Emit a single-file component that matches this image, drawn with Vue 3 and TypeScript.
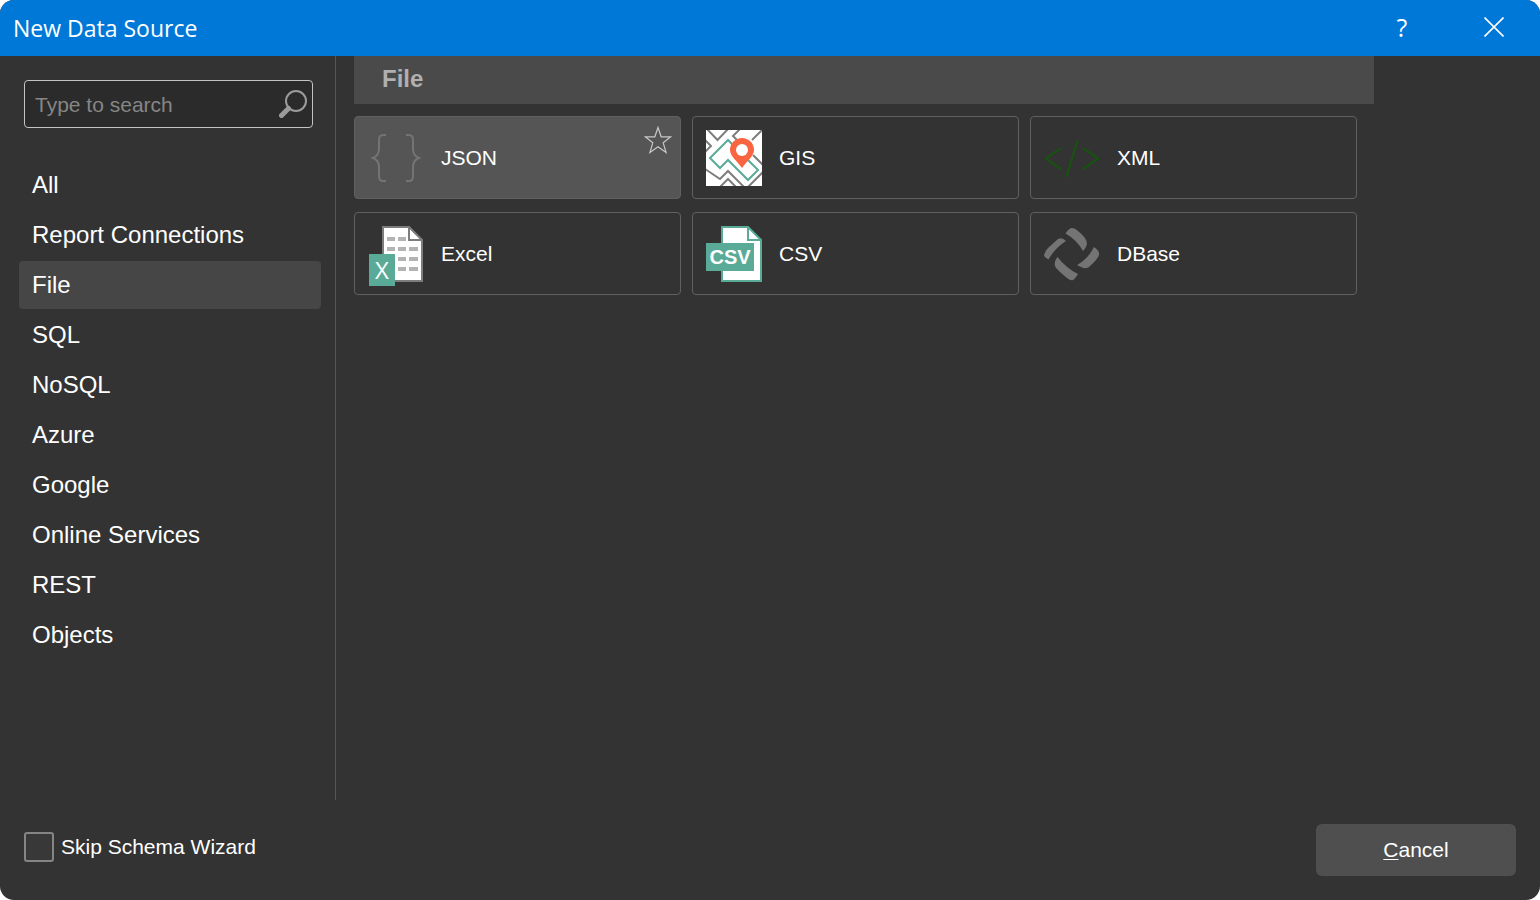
<script setup lang="ts">
import { ref, computed } from 'vue'

type IconName = 'json' | 'gis' | 'xml' | 'excel' | 'csv' | 'dbase'
interface Source { name: string; icon: IconName }

const categories: string[] = [
  'All', 'Report Connections', 'File', 'SQL', 'NoSQL',
  'Azure', 'Google', 'Online Services', 'REST', 'Objects',
]
const sources: Source[] = [
  { name: 'JSON', icon: 'json' },
  { name: 'GIS', icon: 'gis' },
  { name: 'XML', icon: 'xml' },
  { name: 'Excel', icon: 'excel' },
  { name: 'CSV', icon: 'csv' },
  { name: 'DBase', icon: 'dbase' },
]

const category = ref('File')
const active = ref('JSON')
const query = ref('')
const skipWizard = ref(false)

const visible = computed(() =>
  sources.filter((s) => s.name.toLowerCase().includes(query.value.trim().toLowerCase())),
)
</script>

<template>
  <div class="dialog" role="dialog" aria-labelledby="dialog-title">
    <header class="titlebar">
      <h1 id="dialog-title">New Data Source</h1>
      <button type="button" class="caption help" aria-label="Help">?</button>
      <button type="button" class="caption" aria-label="Close">
        <svg width="20" height="20" viewBox="0 0 20 20"><path d="M.5.5l19 19M19.5.5l-19 19" stroke="#fff" stroke-width="1.6" /></svg>
      </button>
    </header>

    <div class="body">
      <aside class="sidebar">
        <div class="search">
          <input v-model="query" type="text" placeholder="Type to search" aria-label="Type to search" />
          <svg width="28" height="28" viewBox="0 0 28 28" fill="none" stroke="#9b9b9b">
            <circle cx="17" cy="11" r="10" stroke-width="2" />
            <path d="M9.5 18.500L2.500 25.500" stroke-width="5" stroke-linecap="round" />
          </svg>
        </div>
        <nav>
          <button
            v-for="c in categories"
            :key="c"
            type="button"
            class="category"
            :class="{ selected: c === category }"
            @click="category = c"
          >{{ c }}</button>
        </nav>
      </aside>

      <main class="content">
        <h2>{{ category }}</h2>
        <div class="grid">
          <div v-for="s in visible" :key="s.name" class="card" :class="{ active: s.name === active }">
            <button type="button" class="source" @click="active = s.name">
              <svg v-if="s.icon === 'json'" class="icon" viewBox="0 0 56 60" fill="none" stroke="#747474" stroke-width="2">
                <path d="M18 5h-3c-3 0-4 1.500-4 5v9c0 4-1 7-6 9 5 2 6 5 6 9v9c0 3.500 1 5 4 5h3" />
                <path d="M38 5h3c3 0 4 1.500 4 5v9c0 4 1 7 6 9-5 2-6 5-6 9v9c0 3.500-1 5-4 5h-3" />
              </svg>
              <svg v-else-if="s.icon === 'gis'" class="icon" viewBox="0 0 56 60" fill="none">
                <svg width="56" height="56" viewBox="0 0 56 56">
                  <path d="M0 0h56v56H0z" fill="#fff" />
                  <g stroke="#7d7d7d" stroke-width="2">
                    <path d="M0-2L11.500 10 23-2M-1 10l6 6-6 6M34-1l-7 7 6 6M57-1L46 10M47 25l10 10M-1 39l15 10 8-8 17 17M14 57l8-8 8 8M42 57l15-15" />
                  </g>
                  <path d="M22 10L4 28l10 10 8-8 20 20 10-10-30-30z" stroke="#5aaa98" stroke-width="2" />
                  <path d="M36 38C31 31 24 26 24 20a12 12 0 0 1 24 0c0 6-7 11-12 18z" fill="#fa6541" />
                  <circle cx="36" cy="20" r="6" fill="#fff" />
                </svg>
              </svg>
              <svg v-else-if="s.icon === 'xml'" class="icon" viewBox="0 0 56 60" fill="none" stroke="#14560c" stroke-width="2">
                <path d="M17 18L2 28.500 17 39M39 18l15 10.500L39 39M33.500 10l-11 37" />
              </svg>
              <svg v-else-if="s.icon === 'excel'" class="icon" viewBox="0 0 56 60">
                <path d="M15 1h26l13 13v41H15z" fill="#fff" stroke="#7d7d7d" stroke-width="2" />
                <path d="M41 1v13h13" fill="none" stroke="#7d7d7d" stroke-width="2" />
                <path d="M19 11h8v4h-8zM30 11h8v4h-8zM19 21h8v4h-8zM30 21h8v4h-8zM41 21h9v4h-9zM30 31h8v4h-8zM41 31h9v4h-9zM30 41h8v4h-8zM41 41h9v4h-9z" fill="#b3b3b3" />
                <path d="M1 28h26v32H1z" fill="#5aaa98" />
                <text class="excel-mark" x="14" y="53" text-anchor="middle">X</text>
              </svg>
              <svg v-else-if="s.icon === 'csv'" class="icon" viewBox="0 0 56 60">
                <path d="M16 1h26l13 13v41H16z" fill="#fff" stroke="#5aaa98" stroke-width="2" />
                <path d="M42 1v13h13" fill="none" stroke="#5aaa98" stroke-width="2" />
                <path d="M0 17h48v28H0z" fill="#5aaa98" />
                <text class="csv-mark" x="24" y="38" text-anchor="middle">CSV</text>
              </svg>
              <svg v-else class="icon" viewBox="0 0 56 60" fill="#747474">
                <path d="M21.500 7.500Q25 2 28 2T34 5Q43 12 43 18 42 22 39 25 33 14 21.500 7.500z" />
                <path d="M0 29Q1 25 4 22L14 13Q18 11 22 15 11 22 4.500 33.500 0 31 0 29z" />
                <path d="M13.500 31Q10 35 11 40 12 43 23 52 27 55 29 54 31 53 34 48 22 42 13.500 31z" />
                <path d="M50 21Q56 25 55 29 54 33 45 41 41 44 33 39 44 33 50 21z" />
              </svg>
              <span>{{ s.name }}</span>
            </button>
            <button v-if="s.name === active" type="button" class="star" aria-label="Add to favorites">
              <svg width="28" height="28" viewBox="0 0 28 28">
                <path d="M14 1.500l3.200 9.300h9.600l-7.600 6 2.900 9.700-8.100-5.800-8.100 5.800 2.900-9.700-7.600-6h9.600z" fill="none" stroke="#c8c8c8" stroke-width="1.200" />
              </svg>
            </button>
          </div>
        </div>
      </main>
    </div>

    <footer class="footer">
      <label class="skip">
        <input v-model="skipWizard" type="checkbox" />
        <span>Skip Schema Wizard</span>
      </label>
      <button type="button" class="cancel"><u>C</u>ancel</button>
    </footer>
  </div>
</template>

<style>
body {
  background: #fff;
}
</style>

<style scoped>
.dialog,
.dialog * {
  box-sizing: border-box;
}
.dialog {
  display: flex;
  flex-direction: column;
  min-height: 100vh;
  overflow: hidden;
  border-radius: 14px;
  background: #333;
  color: #fff;
  font-family: "Liberation Sans", Arial, sans-serif;
  font-size: 21px;
  line-height: 24px;
}
button {
  margin: 0;
  padding: 0;
  border: 0;
  background: none;
  color: inherit;
  font: inherit;
  cursor: pointer;
}
.titlebar {
  display: flex;
  align-items: center;
  height: 56px;
  background: #0078d7;
  font-family: "Open Sans", "Noto Sans", sans-serif;
}
.titlebar h1 {
  flex: 1;
  margin: 0;
  padding-left: 13px;
  font-size: 23px;
  line-height: 32px;
  font-weight: 400;
}
.caption {
  display: flex;
  align-items: center;
  justify-content: center;
  width: 92px;
  height: 54px;
  align-self: flex-start;
}
.help {
  font-size: 25px;
  font-weight: 500;
}
.body {
  display: flex;
  flex: 1;
}
.sidebar {
  flex: none;
  width: 336px;
  padding-top: 24px;
  border-right: 1px solid #555;
}
.search {
  display: flex;
  align-items: center;
  height: 48px;
  margin: 0 22px 33px 24px;
  padding: 0 5px 0 10px;
  border: 1px solid #c4c4c4;
  border-radius: 4px;
  background: #2b2b2b;
}
.search input {
  flex: 1;
  min-width: 0;
  height: 100%;
  padding: 2px 0 0;
  border: 0;
  outline: 0;
  background: none;
  color: #fff;
  font: inherit;
}
.search svg {
  flex: none;
}
.search input::placeholder {
  color: #868686;
  opacity: 1;
}
nav {
  display: flex;
  flex-direction: column;
  gap: 2px;
  padding: 0 14px 0 19px;
}
.category {
  height: 48px;
  padding-left: 13px;
  border-radius: 4px;
  font-size: 24px;
  line-height: 48px;
  text-align: left;
}
.category.selected {
  background: #464646;
}
.content {
  flex: 1;
  max-width: 1038px;
  padding-left: 18px;
}
.content h2 {
  height: 48px;
  margin: 0 0 12px;
  padding-left: 28px;
  background: #4a4a4a;
  color: #b0b0b0;
  font-size: 24px;
  line-height: 46px;
}
.grid {
  display: grid;
  grid-template-columns: repeat(3, minmax(0, 1fr));
  gap: 13px 11px;
  margin-right: 17px;
}
.card {
  position: relative;
  height: 83px;
  border: 1px solid #606060;
  border-radius: 4px;
}
.card.active {
  background: #555;
}
.source {
  display: flex;
  align-items: center;
  gap: 17px;
  width: 100%;
  height: 100%;
  padding: 0 13px;
}
.icon {
  flex: none;
  width: 56px;
  height: 60px;
  margin-top: 4px;
}
.excel-mark {
  fill: #fff;
  font: 400 24px "Open Sans", sans-serif;
}
.csv-mark {
  fill: #fff;
  font: 700 20px "Liberation Sans", sans-serif;
}
.star {
  position: absolute;
  top: 9px;
  right: 8px;
  display: flex;
}
.footer {
  display: flex;
  align-items: center;
  justify-content: space-between;
  height: 100px;
  padding: 0 24px;
}
.skip {
  display: flex;
  align-items: center;
  gap: 7px;
  padding-bottom: 6px;
}
.skip input {
  appearance: none;
  width: 30px;
  height: 30px;
  margin: 0;
  border: 2px solid #858585;
  border-radius: 3px;
  background: #383838;
}
.skip input:checked {
  background: #0078d7;
}
.cancel {
  width: 200px;
  height: 52px;
  border-radius: 6px;
  background: #4f4f4f;
}
.cancel u {
  text-decoration-thickness: 1px;
  text-underline-offset: 2px;
}
</style>
